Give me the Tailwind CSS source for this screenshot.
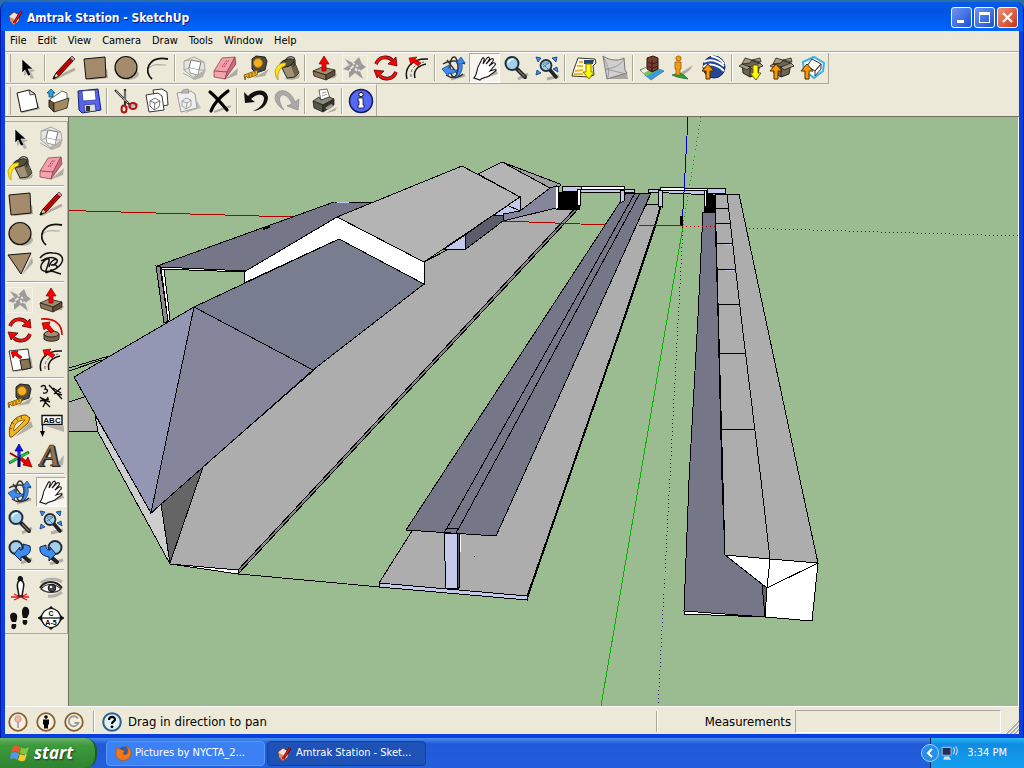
<!DOCTYPE html>
<html lang="en">
<head>
  <meta charset="utf-8">
  <title>Amtrak Station - SketchUp</title>
  <script src="https://cdn.jsdelivr.net/npm/@tailwindcss/browser@4"></script>
</head>
<body class="h-screen flex flex-col overflow-hidden bg-[#2a6ea8] font-['DejaVu_Sans_Condensed','DejaVu_Sans',sans-serif] text-[11px] text-black">

  <!-- icon set, all on a 26px grid -->
  <svg class="hidden" xmlns="http://www.w3.org/2000/svg">
    <symbol id="i-select" viewBox="0 0 26 26">
      <path d="M10 7v14l4-3 3 6 3-1-3-6 4-1z" fill="#b5b2a4"/>
      <path d="M8 4v14l3-3 3 6 3-1-3-6h5z" fill="#000" stroke="#fff" stroke-width=".6"/>
    </symbol>
    <symbol id="i-line" viewBox="0 0 26 26">
      <path d="M3 24 24 14" stroke="#b0ada0" stroke-width="2.5"/>
      <path d="M2 24 5 18 19 3 22 6 8 21z" fill="#e00" stroke="#300" stroke-width="1"/>
      <path d="M7 19 20 5" stroke="#8e0000" stroke-width="1.2"/>
      <path d="M2 24 5 18 8 21z" fill="#e8c88c" stroke="#222" stroke-width=".8"/><path d="M2 24l1-3 2 2z"/>
      <path d="M19 3 21 1 24 4 22 6z" fill="#f08caa" stroke="#333" stroke-width=".8"/>
    </symbol>
    <symbol id="i-rect" viewBox="0 0 26 26">
      <path d="M6 25 26 23 25 14z" fill="#aaa79a"/>
      <path d="M2 4 23 2 24 22 4 24z" fill="#a38b6b" stroke="#111"/>
    </symbol>
    <symbol id="i-circle" viewBox="0 0 26 26">
      <ellipse cx="15" cy="19" rx="11" ry="6" fill="#b5b2a5"/>
      <circle cx="13" cy="12.500" r="11" fill="#a38b6b" stroke="#111" stroke-width="1.2"/>
    </symbol>
    <symbol id="i-arc" viewBox="0 0 26 26">
      <path d="M4 14C9 8 14 10 22 10" fill="none" stroke="#aaa" stroke-width="1.2"/>
      <path d="M8 24C-1 17 4 0 24 4" fill="none" stroke="#111" stroke-width="1.8"/>
    </symbol>
    <symbol id="i-component" viewBox="0 0 26 26">
      <path d="M11 24 25 15 22 22 14 25z" fill="#b8b5a8"/>
      <path d="M3 6 13 2 23 7 24 15 13 23 3 15z" fill="#e6e5e0" stroke="#a5a5a5"/>
      <path d="M8 13 10 5 20 7 18 15z" fill="#fff" stroke="#777"/>
      <path d="M8 13 9 18 17 20 18 15" fill="#fff" stroke="#888" stroke-width=".8"/>
      <path d="M3 15 8 13M24 15 18 15M13 23l2-4M3 6l7-1M23 7l-3 0M2 18l11 6" fill="none" stroke="#aaa"/>
    </symbol>
    <symbol id="i-eraser" viewBox="0 0 26 26">
      <path d="M12 25 26 13 25 20z" fill="#b0ada0"/>
      <path d="M2 16 10 3 23 2 15 17z" fill="#f3a0aa" stroke="#8a4a54" stroke-width=".8"/>
      <path d="M2 16 15 17 13 24 2 22z" fill="#f5a3ad" stroke="#8a4a54" stroke-width=".8"/>
      <path d="M15 17 23 2 24 9 13 24z" fill="#d2697a" stroke="#8a4a54" stroke-width=".8"/>
      <path d="M10 12 15 5M12 12l5-7" stroke="#a04a60" stroke-dasharray="2 1"/>
    </symbol>
    <symbol id="i-tape" viewBox="0 0 26 26">
      <path d="M10 23 26 14 22 21z" fill="#b0ada0"/>
      <path d="M9 4 13 1 22 2 24 6 22 15 13 18 9 14z" fill="#4b4b42" stroke="#222"/>
      <circle cx="15" cy="8" r="4.500" fill="#f5ae1c" stroke="#a87200"/>
      <path d="M1 20 15 15 14 20 5 23 3 21 2 25z" fill="#f5b51c" stroke="#6b4a00" stroke-width=".8"/>
      <path d="M6 19v3M9 18v3M12 17v2" stroke="#533a00" stroke-width=".8"/>
    </symbol>
    <symbol id="i-paint" viewBox="0 0 26 26">
      <path d="M10 24 26 19 25 23 18 25z" fill="#b0ada0"/>
      <path d="M7 11 20 6 25 18 21 22 13 23z" fill="#a09272" stroke="#222"/>
      <path d="M20 6 25 18 21 22 16 8z" fill="#6b6148"/>
      <ellipse cx="13" cy="8" rx="7.500" ry="3.500" transform="rotate(-22 13 8)" fill="#57513c" stroke="#222"/>
      <path d="M11 9C11 2 17 0 20 3 22 6 21 9 19 12" fill="none" stroke="#333" stroke-width="1.300"/>
      <path d="M12 8C6 7 3 11 1 16l1 6 2 3 0-5c1-5 3-8 7-9z" fill="#ffe21a" stroke="#b09000" stroke-width=".7"/>
    </symbol>
    <symbol id="i-push" viewBox="0 0 26 26">
      <path d="M16 24 26 19 24 23z" fill="#b0ada0"/>
      <path d="M2 16 11 12 24 15 15 20z" fill="#a38b6b" stroke="#222" stroke-width=".8"/>
      <path d="M2 16 15 20V25L3 21z" fill="#8a7454" stroke="#222" stroke-width=".8"/>
      <path d="M15 20 24 15V20L15 25z" fill="#5f4e35" stroke="#222" stroke-width=".8"/>
      <path d="M11 16V9H8L13 1l5 8h-3v7z" fill="#f00" stroke="#700" stroke-width=".7"/>
    </symbol>
    <symbol id="i-move" viewBox="0 0 26 26">
      <path d="M.5 .5h25v25h-25z" fill="none" stroke="#fff" stroke-dasharray="1 1"/>
      <path d="M3 4 11 8 17 2 20 9 24 12 18 16 21 24 13 18 7 23 7 16 1 14 7 10z" fill="#9b9b9b"/>
      <path d="M11 8l4 3 3-1M18 16l-3-2-2 4M7 16l3-2-3-4M10 11l5 4" stroke="#ece9d8" stroke-width="2" fill="none" stroke-dasharray="2 2"/>
    </symbol>
    <symbol id="i-rotate" viewBox="0 0 26 26">
      <path d="M3 9C6 1 15 1 19 5" fill="none" stroke="#400" stroke-width="3.600"/>
      <path d="M3 9C6 1 15 1 19 5" fill="none" stroke="#e11" stroke-width="2.400"/>
      <path d="M15 9 23 2 24 11z" fill="#f00" stroke="#400" stroke-width=".7"/>
      <path d="M23 17C20 25 11 25 7 21" fill="none" stroke="#400" stroke-width="3.600"/>
      <path d="M23 17C20 25 11 25 7 21" fill="none" stroke="#e11" stroke-width="2.400"/>
      <path d="M1 15 11 16 4 23z" fill="#f00" stroke="#400" stroke-width=".7"/>
    </symbol>
    <symbol id="i-offset" viewBox="0 0 26 26">
      <path d="M3 24C0 13 8 3 24 4M11 23C9 16 13 11 22 9" fill="none" stroke="#111" stroke-width="1.500"/>
      <path d="M7 22C6 15 10 9 20 7" fill="none" stroke="#666" stroke-dasharray="3 2"/>
      <path d="M5 3 13 2 11 4 17 8 14 11 9 7 7 10z" fill="#f00" stroke="#700" stroke-width=".6"/>
    </symbol>
    <symbol id="i-orbit" viewBox="0 0 26 26">
      <path d="M10 24 24 20" stroke="#b0ada0" stroke-width="3"/>
      <ellipse cx="13" cy="12" rx="4" ry="10" fill="none" stroke="#333" stroke-width="1.500"/>
      <path d="M2 9C8 5 18 5 24 9M6 5 18 21M5 20C10 24 18 23 22 19" fill="none" stroke="#333" stroke-width="1.300"/>
      <path d="M20 2 24 8 21 8C22 15 20 20 14 23 17 18 18 14 18 8L15 8z" fill="#3f8cf0" stroke="#123a80" stroke-width=".7"/>
      <path d="M1 14 8 10 8 13C11 15 13 15 16 15 14 18 12 19 8 18L7 21z" fill="#3f8cf0" stroke="#123a80" stroke-width=".7"/>
    </symbol>
    <symbol id="i-hand" viewBox="0 0 26 26">
      <path d="M10 24 26 19 24 13z" fill="#b5b2a5"/>
      <path d="M2 23C6 19 4 14 7 10L10 4C11 2 13 3 12 5L11 9 15 3C17 1 18 3 17 5L14 9 19 4C21 3 22 4 21 6L17 11 21 8C23 7 24 9 23 10L18 16C21 15 23 14 24 15 24 17 20 18 17 21 14 23 10 22 8 25z" fill="#fff" stroke="#111" stroke-width="1.100"/>
    </symbol>
    <symbol id="i-zoom" viewBox="0 0 26 26">
      <path d="M15 24 25 19" stroke="#b0ada0" stroke-width="3"/>
      <path d="M14 14 22 22" stroke="#222" stroke-width="4" stroke-linecap="round"/>
      <path d="M15 15 22 22" stroke="#777" stroke-width="1.200"/>
      <circle cx="9" cy="8.500" r="6.500" fill="#a5cfe6" stroke="#1f2f3c" stroke-width="2"/>
      <path d="M5 8C6 5 8 4 11 4" stroke="#eafaff" stroke-width="1.600" fill="none"/>
    </symbol>
    <symbol id="i-extents" viewBox="0 0 26 26">
      <path d="M13 24 25 21" stroke="#b0ada0" stroke-width="3"/>
      <path d="M16 15 22 22" stroke="#222" stroke-width="3.500" stroke-linecap="round"/>
      <circle cx="12" cy="10.500" r="5.500" fill="#a5cfe6" stroke="#1f2f3c" stroke-width="1.800"/>
      <path d="M9 8h6M9 12l6-4M9 9l5 5" stroke="#5b7f96"/>
      <path d="M2 2 7 3 4 7zM23 2 22 7 18 3zM2 20 3 15 7 18zM24 17 19 14 23 12z" fill="#3f8cf0" stroke="#123a80" stroke-width=".8"/>
    </symbol>
    <symbol id="i-getview" viewBox="0 0 26 26">
      <path d="M7 3 24 4 25 8 22 11 23 20 18 22 1 21 3 14z" fill="#fffbe0" stroke="#333"/>
      <path d="M13 5h10l-1 4H13z" fill="#23446b"/><path d="M8 7h4M6 11h6M4 16l8-1M3 19h9" stroke="#f3b52c" stroke-width="2"/>
      <path d="M15 9h5v8h3l-5 7-6-7h3z" fill="#ff0" stroke="#8a7a00"/>
    </symbol>
    <symbol id="i-terrain" viewBox="0 0 26 26">
      <path d="M3 24 26 24 25 18z" fill="#aaa79a"/>
      <path d="M1 1C8 6 17 6 22 3L23 15 25 18 5 24z" fill="#cfcfcf" stroke="#777"/>
      <path d="M1 1C5 9 9 16 5 24M4 14 24 19M22 3C20 10 12 13 4 14" fill="none" stroke="#8e8e8e" stroke-width=".8"/>
    </symbol>
    <symbol id="i-building" viewBox="0 0 26 26">
      <path d="M1 15 10 11 25 16 12 25z" fill="#e6e2cf" stroke="#555" stroke-width=".8"/>
      <path d="M5 20 18 13 25 16 12 25z" fill="#3a9bd8"/><path d="M4 18 16 12 20 14 8 21z" fill="#7cc45a"/><path d="M2 16 8 12 14 13 5 18z" fill="#f3eed8"/>
      <path d="M8 3 14 1 19 3V14L13 17 8 14z" fill="#7b3f30" stroke="#2e120c"/>
      <path d="M13 5v12M9 7l4 2 6-2M9 11l4 2 6-2" stroke="#3d1a12" fill="none"/>
    </symbol>
    <symbol id="i-street" viewBox="0 0 26 26">
      <path d="M7 20 23 10 20 15 12 21z" fill="#b0ada0"/>
      <path d="M2 20 9 18 14 20 18 24 12 23 7 22z" fill="#27a340" stroke="#0e6420" stroke-width=".7"/>
      <circle cx="8.500" cy="3.500" r="2.600" fill="#f19a14" stroke="#8c4e00" stroke-width=".7"/>
      <path d="M5 7h6v7h-1v6H6v-6H5z" fill="#f19a14" stroke="#8c4e00" stroke-width=".7"/>
    </symbol>
    <symbol id="i-earth" viewBox="0 0 26 26">
      <circle cx="13" cy="12" r="11" fill="#24479a" stroke="#14265a"/>
      <path d="M3 7C9 3 17 6 23 11M2 12C8 7 17 10 23 16M10 1C15 2 20 4 23 9" fill="none" stroke="#fff" stroke-width="2"/>
      <path d="M5 24V16H1L7 9l6 7H9v8z" fill="#f90" stroke="#4a2a00"/>
    </symbol>
    <symbol id="i-box" viewBox="0 0 26 26">
      <path d="M4 9 12 5 22 8 20 19 12 22 5 18z" fill="#6f6453" stroke="#222"/>
      <path d="M12 11 12 22" stroke="#222"/>
      <path d="M4 9 12 12 9 15 1 11zM12 12 22 8 25 11 15 15zM4 9 7 3 14 5 12 8zM14 5 22 3 23 7z" fill="#a5987e" stroke="#222" stroke-width=".8"/>
    </symbol>
    <symbol id="i-getmodel" viewBox="0 0 26 26">
      <use href="#i-box"/><path d="M15 10h5v8h3l-5 7-6-7h3z" fill="#ff0" stroke="#6b6000"/>
    </symbol>
    <symbol id="i-sharemodel" viewBox="0 0 26 26">
      <use href="#i-box"/><path d="M5 24V16H1L7 9l6 7H9v8z" fill="#f90" stroke="#4a2a00"/>
    </symbol>
    <symbol id="i-sharecomp" viewBox="0 0 26 26">
      <path d="M3 7 14 2 24 8 23 16 14 23 4 15z" fill="#fff" stroke="#36b0e8" stroke-width="2"/>
      <path d="M7 11 12 4 21 9 15 16zM15 16v5M15 16l6-7v5l-6 7" fill="#fff" stroke="#333"/>
      <path d="M5 24V16H1L7 9l6 7H9v8z" fill="#f90" stroke="#4a2a00"/>
    </symbol>
    <symbol id="i-new" viewBox="0 0 26 26">
      <path d="M8 25 26 21 22 10z" fill="#b0ada0"/>
      <path d="M3 5 15 2 21 6 24 20 7 24z" fill="#fff" stroke="#111"/><path d="M15 2 16 7 21 6z" fill="#ddd" stroke="#111" stroke-width=".7"/>
    </symbol>
    <symbol id="i-open" viewBox="0 0 26 26">
      <path d="M5 11 10 8 17 3 22 5V16L8 21z" fill="#fff" stroke="#444" stroke-width=".8"/>
      <path d="M4 12 9 15 9 24 4 19z" fill="#6d5638" stroke="#222"/><path d="M9 15 24 10 22 20 9 24z" fill="#a68a61" stroke="#222" stroke-width=".8"/>
      <path d="M4 9V5H2L6 1l4 4H8v4z" fill="#29a5dd" stroke="#0d4a6a" stroke-width=".8"/>
    </symbol>
    <symbol id="i-save" viewBox="0 0 26 26">
      <path d="M2 3 22 1 25 22 6 25 3 22z" fill="#5564f0" stroke="#14206e"/>
      <path d="M6 3 19 2 20 12 7 13z" fill="#fff" stroke="#14206e" stroke-width=".6"/>
      <path d="M8 17 19 16 20 23 9 24z" fill="#ddd" stroke="#14206e" stroke-width=".6"/><path d="M10 18h4v5h-4z" fill="#333"/>
    </symbol>
    <symbol id="i-cut" viewBox="0 0 26 26">
      <path d="M12 20 25 16" stroke="#b0ada0" stroke-width="2"/>
      <path d="M2 2 17 17M12 1 12 18" stroke="#333" stroke-width="2.200"/><path d="M3 3 15 15M12 3v10" stroke="#ccc" stroke-width=".8"/>
      <ellipse cx="11" cy="21" rx="2.500" ry="3.500" fill="none" stroke="#b01212" stroke-width="2"/>
      <ellipse cx="20" cy="18" rx="3.500" ry="3" fill="none" stroke="#b01212" stroke-width="2"/>
    </symbol>
    <symbol id="i-copy" viewBox="0 0 26 26">
      <path d="M9 2 18 1 23 4 24 17 12 19z" fill="#fff" stroke="#333"/>
      <path d="M2 7 14 5 18 8 20 22 5 24z" fill="#fff" stroke="#333"/>
      <path d="M6 13 11 10 16 13 15 19 10 22 6 18zM6 13l5 2 5-2M11 15l-1 7" fill="none" stroke="#666" stroke-width=".9"/>
    </symbol>
    <symbol id="i-paste" viewBox="0 0 26 26">
      <path d="M10 25 26 20 22 13z" fill="#c2bfb2"/>
      <path d="M2 5 16 3 20 6 22 20 6 24z" fill="#eee" stroke="#999"/><path d="M6 5 8 2 13 1 14 5z" fill="#bbb" stroke="#999"/>
      <path d="M7 13 11 10 16 12 16 18 11 21 7 18zM7 13l5 2 4-3M12 15l-1 6" fill="none" stroke="#999" stroke-width=".9"/>
    </symbol>
    <symbol id="i-delete" viewBox="0 0 26 26">
      <path d="M8 24 25 18" stroke="#b0ada0" stroke-width="2"/>
      <path d="M4 4C9 8 16 16 21 22M22 3C14 9 7 17 5 23" fill="none" stroke="#000" stroke-width="3.200" stroke-linecap="round"/>
    </symbol>
    <symbol id="i-undo" viewBox="0 0 26 26">
      <path d="M1 4 2 15 12 14 8 11C13 6 20 5 21 10 21 16 17 20 10 23 20 22 25 16 25 9 23 0 12 1 5 8z" fill="#111"/>
    </symbol>
    <symbol id="i-redo" viewBox="0 0 26 26">
      <path d="M24 22 25 11 21 14C18 4 7 -1 2 6 -1 12 4 18 10 22 5 15 4 9 8 7 12 6 16 11 18 16L13 18z" fill="#aaa" stroke="#888" stroke-width=".7"/>
    </symbol>
    <symbol id="i-print" viewBox="0 0 26 26">
      <path d="M15 25 26 19 24 23z" fill="#b0ada0"/>
      <path d="M8 2 16 1 19 10 10 13z" fill="#fff" stroke="#444" stroke-width=".8"/><path d="M11 5l4-1M11 8l5-2" stroke="#999"/>
      <path d="M2 13 8 9 10 12 18 9 23 11 12 17z" fill="#8a8a78" stroke="#222" stroke-width=".8"/>
      <path d="M2 13 12 17V24L3 20z" fill="#55564a" stroke="#222" stroke-width=".8"/><path d="M12 17 23 11V17L12 24z" fill="#34352c" stroke="#222" stroke-width=".8"/>
      <path d="M14 20l6-4 3 2-6 4z" fill="#9b9b8c"/>
    </symbol>
    <symbol id="i-info" viewBox="0 0 26 26">
      <circle cx="13" cy="13" r="11.500" fill="#5468f5" stroke="#111a60" stroke-width="1.500"/>
      <circle cx="13" cy="6.500" r="2.200" fill="#fff" stroke="#112"/>
      <path d="M10 10h5v7h1v3h-6v-3h1v-4h-1z" fill="#fff" stroke="#112" stroke-width=".8"/>
    </symbol>
    <symbol id="i-polygon" viewBox="0 0 26 26">
      <path d="M15 24 26 12 25 6z" fill="#b0ada0"/><path d="M1 4 24 2 14 23z" fill="#a38b6b" stroke="#111"/>
    </symbol>
    <symbol id="i-freehand" viewBox="0 0 26 26">
      <path d="M2 7C6 2 10 1 15 2 22 2 26 6 24 11 21 18 9 23 4 19 0 14 8 7 11 8 12 12 7 18 8 22M11 16C13 8 21 6 19 11 17 14 13 14 13 14 22 12 20 20 12 19M3 10C10 5 17 6 19 9M8 22C14 18 18 22 23 23" fill="none" stroke="#111" stroke-width="1.500"/>
    </symbol>
    <symbol id="i-follow" viewBox="0 0 26 26">
      <path d="M3 2C18 1 24 8 24 18" fill="none" stroke="#d00" stroke-width="1.600"/>
      <path d="M6 17v5c3 3 12 3 15 0v-5z" fill="#7b6546" stroke="#222"/><ellipse cx="13.500" cy="17" rx="7.500" ry="3" fill="#a38b6b" stroke="#222"/>
      <path d="M4 6 12 5 11 8 16 14 13 16 8 11 6 13z" fill="#f00" stroke="#700" stroke-width=".7"/>
    </symbol>
    <symbol id="i-scale" viewBox="0 0 26 26">
      <path d="M8 25 26 21 24 10z" fill="#b0ada0"/>
      <path d="M2 4 21 2 24 21 6 24z" fill="#fff" stroke="#333"/><path d="M13 13 22 12 24 21 15 23z" fill="#8a7454" stroke="#222"/>
      <path d="M4 5 11 4 10 6 15 10 13 12 8 8 6 11z" fill="#f00" stroke="#700" stroke-width=".7"/>
    </symbol>
    <symbol id="i-dimension" viewBox="0 0 26 26">
      <path d="M3 4C5 1 9 3 7 6 11 6 10 11 5 10M11 2 24 16M2 14 12 24M16 11l7-6M15 5l8 5M17 10l7 2M2 18l9-2M5 24l5-10M3 15l9 4" fill="none" stroke="#111" stroke-width="1.400"/>
    </symbol>
    <symbol id="i-protractor" viewBox="0 0 26 26">
      <path d="M8 24 26 14 24 8z" fill="#b0ada0"/>
      <path d="M3 24C0 12 8 2 19 2L23 5 21 10 5 24z" fill="#f5b51c" stroke="#6b4a00"/>
      <path d="M7 18C6 13 10 7 18 7z" fill="#ece9d8" stroke="#6b4a00" stroke-width=".8"/>
      <path d="M2 15l3 1M4 9l3 2M9 5l2 3M14 3l1 3" stroke="#6b4a00" stroke-width=".8"/>
    </symbol>
    <symbol id="i-text" viewBox="0 0 26 26">
      <path d="M8 13h18v6z" fill="#b5b2a5"/>
      <path d="M4 2.500h20v9H4z" fill="#fff" stroke="#111" stroke-width="1.400"/><path d="M4.500 11v9" stroke="#111" stroke-width="1.200"/>
      <path d="M2 18h5L4.500 24z"/>
      <text x="14" y="10" font-family="Liberation Sans, sans-serif" font-size="8" font-weight="bold" text-anchor="middle">ABC</text>
    </symbol>
    <symbol id="i-axes" viewBox="0 0 26 26">
      <path d="M3 10 20 20" stroke="#800" stroke-width="2"/><path d="M12 14 18 19" stroke="#e00" stroke-width="4"/><path d="M16 22 25 24 21 14z" fill="#e00" stroke="#600" stroke-width=".7"/>
      <path d="M2 20 22 9" stroke="#0a7a1a" stroke-width="3"/><path d="M3 19 21 10" stroke="#2c4" stroke-width="1.400"/>
      <path d="M12 24V8" stroke="#007" stroke-width="3"/><path d="M12 14V6" stroke="#22f" stroke-width="2"/><path d="M8 8 12 1l4 7z" fill="#11f" stroke="#006" stroke-width=".7"/>
    </symbol>
    <symbol id="i-3dtext" viewBox="0 0 26 26">
      <path d="M16 24 26 12 25 22z" fill="#b5b2a5"/>
      <text x="13.500" y="24" font-family="Liberation Serif, serif" font-size="32" font-weight="bold" font-style="italic" text-anchor="middle" fill="#222">A</text>
      <text x="12" y="23" font-family="Liberation Serif, serif" font-size="32" font-weight="bold" font-style="italic" text-anchor="middle" fill="#8a7454" stroke="#222" stroke-width=".6">A</text>
    </symbol>
    <symbol id="i-prev" viewBox="0 0 26 26">
      <path d="M14 24 25 20" stroke="#b0ada0" stroke-width="3"/>
      <path d="M15 16 22 22" stroke="#222" stroke-width="4" stroke-linecap="round"/>
      <circle cx="9" cy="8.500" r="6.500" fill="#a5cfe6" stroke="#1f2f3c" stroke-width="2"/>
      <path d="M7 15 13 8V11C16 11 17 9 16 5L23 7C25 14 20 17 14 18V22z" fill="#3f8cf0" stroke="#0a2050"/>
    </symbol>
    <symbol id="i-next" viewBox="0 0 26 26">
      <path d="M12 25 25 21" stroke="#b0ada0" stroke-width="3"/>
      <path d="M13 18 19 23" stroke="#222" stroke-width="4" stroke-linecap="round"/>
      <circle cx="17" cy="8.500" r="6.500" fill="#a5cfe6" stroke="#1f2f3c" stroke-width="2"/>
      <path d="M18 15 12 8V11C9 11 8 10 8 6L2 8C1 14 5 17 11 18V22z" fill="#3f8cf0" stroke="#0a2050"/>
    </symbol>
    <symbol id="i-camera" viewBox="0 0 26 26">
      <path d="M7 19l13 6M20 19 7 25M4 22h18" stroke="#e11" stroke-width="1.300"/>
      <path d="M13 2c2 0 3 2 2 4 2 1 2 5 1 9l-1 6h-3l-1-6c-1-3-1-8 1-9-1-2-1-4 1-4z" fill="#fff" stroke="#111" stroke-width="1.500"/>
      <path d="M13 1c3 0 3 3 2 5l-3 0c-1-2-1-5 1-5z" fill="#111"/>
    </symbol>
    <symbol id="i-look" viewBox="0 0 26 26">
      <path d="M3 8C8 3 18 3 24 7M10 21c6 1 10-1 14-4" fill="none" stroke="#b5b2a5" stroke-width="3"/>
      <path d="M3 14C8 8 17 8 23 14 17 19 8 18 3 14z" fill="#fff" stroke="#333" stroke-width="1.200"/>
      <circle cx="14" cy="13" r="3.800" fill="#444" stroke="#111"/><circle cx="13" cy="12" r="1.200" fill="#fff"/>
      <path d="M2 13C7 5 18 5 24 13" fill="none" stroke="#222" stroke-width="2"/>
    </symbol>
    <symbol id="i-walk" viewBox="0 0 26 26">
      <path d="M5 8c4-1 6 2 5 6l-1 3H5c-2-3-3-8 0-9zM5 19h4c1 3-1 6-3 5-2 0-2-3-1-5zM17 2c4-1 6 3 5 7l-2 4h-4c-1-3-2-9 1-11zM16 15h4c1 4-1 5-2 5-2 0-3-3-2-5z" fill="#111"/>
    </symbol>
    <symbol id="i-section" viewBox="0 0 26 26">
      <path d="M13 1 26 13 13 25 0 13z" fill="#111"/><circle cx="13" cy="13" r="9.500" fill="#fff" stroke="#111" stroke-width="1.200"/>
      <path d="M0 13h26" stroke="#111" stroke-width="1.300"/>
      <text x="13" y="11" font-family="Liberation Sans, sans-serif" font-size="7" font-weight="bold" text-anchor="middle">C</text>
      <text x="13" y="20" font-family="Liberation Sans, sans-serif" font-size="7" font-weight="bold" text-anchor="middle">A-5</text>
    </symbol>
    <symbol id="i-app" viewBox="0 0 16 16">
      <path d="M2 6 7 2 12 5 12 11 7 15 3 11z" fill="#e9e2d6" stroke="#6a3a28" stroke-width=".8"/><path d="M3 7 7 9 7 15 3 11z" fill="#d88a68"/>
      <path d="M7 13 14 2" stroke="#400" stroke-width="2.600"/><path d="M7 13 14 2" stroke="#e11" stroke-width="1.400"/>
    </symbol>
  </svg>

  <!-- application window -->
  <div class="flex-1 min-h-0 flex flex-col mt-0.5 rounded-t-lg bg-[#0a3fe0] border-x border-[#0019a8] overflow-hidden">
    <header class="h-[29px] shrink-0 flex items-center gap-1 pl-1.5 pr-[5px] pt-0.5 bg-linear-to-b from-[#0a5ce8] via-[#0054e3] via-30% to-[#0066ff]">
      <svg class="w-4 h-4"><use href="#i-app"/></svg>
      <h1 class="flex-1 text-[12px] font-bold text-white [text-shadow:1px_1px_#0a1883]">Amtrak Station - SketchUp</h1>
      <div class="flex gap-0.5">
        <button aria-label="Minimize" class="w-[21px] h-[21px] rounded-[3px] border border-white bg-linear-to-br from-[#6f95f5] to-[#1c4fd0] flex items-center justify-center"><svg class="w-[15px] h-[15px]" viewBox="0 0 15 15"><path d="M3 10h7v3H3z" fill="#fff"/></svg></button>
        <button aria-label="Maximize" class="w-[21px] h-[21px] rounded-[3px] border border-white bg-linear-to-br from-[#6f95f5] to-[#1c4fd0] flex items-center justify-center"><svg class="w-[15px] h-[15px]" viewBox="0 0 15 15"><path d="M2 2h11v11H2zM3 5v7h9V5z" fill="#fff" fill-rule="evenodd"/></svg></button>
        <button aria-label="Close" class="w-[21px] h-[21px] rounded-[3px] border border-white bg-linear-to-br from-[#ee8f78] to-[#c8300c] flex items-center justify-center"><svg class="w-[15px] h-[15px]" viewBox="0 0 15 15"><path d="M3 3 12 12M12 3 3 12" stroke="#fff" stroke-width="2.200"/></svg></button>
      </div>
    </header>

    <div class="flex-1 min-h-0 mx-1 mb-1 flex flex-col bg-[#ece9d8]">
      <nav class="h-5 shrink-0 flex items-center pl-[5px] gap-[11px]">
        <button>File</button><button>Edit</button><button>View</button><button>Camera</button><button>Draw</button><button>Tools</button><button>Window</button><button>Help</button>
      </nav>

      <div class="shrink-0 border-t border-[#aca899] flex flex-col items-start">
        <div class="h-px self-stretch bg-white"></div>
        <div class="h-[31px] flex items-center border-b border-r border-[#aca899] pl-0.5">
          <div class="w-1 h-7 border-x border-l-white border-r-[#aca899]"></div>
          <button aria-label="Select" class="w-[31px] h-[30px] flex items-center justify-center"><svg class="w-[26px] h-[26px]"><use href="#i-select"/></svg></button>
          <div class="w-0.5 h-[26px] mx-0.5 border-l border-[#aca899] bg-white"></div>
          <button aria-label="Line" class="w-[31px] h-[30px] flex items-center justify-center"><svg class="w-[26px] h-[26px]"><use href="#i-line"/></svg></button>
          <button aria-label="Rectangle" class="w-[31px] h-[30px] flex items-center justify-center"><svg class="w-[26px] h-[26px]"><use href="#i-rect"/></svg></button>
          <button aria-label="Circle" class="w-[31px] h-[30px] flex items-center justify-center"><svg class="w-[26px] h-[26px]"><use href="#i-circle"/></svg></button>
          <button aria-label="Arc" class="w-[31px] h-[30px] flex items-center justify-center"><svg class="w-[26px] h-[26px]"><use href="#i-arc"/></svg></button>
          <div class="w-0.5 h-[26px] mx-0.5 border-l border-[#aca899] bg-white"></div>
          <button aria-label="Make Component" class="w-[31px] h-[30px] flex items-center justify-center"><svg class="w-[26px] h-[26px]"><use href="#i-component"/></svg></button>
          <button aria-label="Eraser" class="w-[31px] h-[30px] flex items-center justify-center"><svg class="w-[26px] h-[26px]"><use href="#i-eraser"/></svg></button>
          <button aria-label="Tape Measure" class="w-[31px] h-[30px] flex items-center justify-center"><svg class="w-[26px] h-[26px]"><use href="#i-tape"/></svg></button>
          <button aria-label="Paint Bucket" class="w-[31px] h-[30px] flex items-center justify-center"><svg class="w-[26px] h-[26px]"><use href="#i-paint"/></svg></button>
          <div class="w-0.5 h-[26px] mx-0.5 border-l border-[#aca899] bg-white"></div>
          <button aria-label="Push/Pull" class="w-[31px] h-[30px] flex items-center justify-center"><svg class="w-[26px] h-[26px]"><use href="#i-push"/></svg></button>
          <button aria-label="Move" class="w-[31px] h-[30px] flex items-center justify-center"><svg class="w-[26px] h-[26px]"><use href="#i-move"/></svg></button>
          <button aria-label="Rotate" class="w-[31px] h-[30px] flex items-center justify-center"><svg class="w-[26px] h-[26px]"><use href="#i-rotate"/></svg></button>
          <button aria-label="Offset" class="w-[31px] h-[30px] flex items-center justify-center"><svg class="w-[26px] h-[26px]"><use href="#i-offset"/></svg></button>
          <div class="w-0.5 h-[26px] mx-0.5 border-l border-[#aca899] bg-white"></div>
          <button aria-label="Orbit" class="w-[31px] h-[30px] flex items-center justify-center"><svg class="w-[26px] h-[26px]"><use href="#i-orbit"/></svg></button>
          <button aria-label="Pan" class="w-[31px] h-[30px] flex items-center justify-center bg-[#f6f4ec] border border-t-[#aca899] border-l-[#aca899] border-b-white border-r-white"><svg class="w-[26px] h-[26px]"><use href="#i-hand"/></svg></button>
          <button aria-label="Zoom" class="w-[31px] h-[30px] flex items-center justify-center"><svg class="w-[26px] h-[26px]"><use href="#i-zoom"/></svg></button>
          <button aria-label="Zoom Extents" class="w-[31px] h-[30px] flex items-center justify-center"><svg class="w-[26px] h-[26px]"><use href="#i-extents"/></svg></button>
          <div class="w-0.5 h-[26px] mx-0.5 border-l border-[#aca899] bg-white"></div>
          <button aria-label="Get Current View" class="w-[31px] h-[30px] flex items-center justify-center"><svg class="w-[26px] h-[26px]"><use href="#i-getview"/></svg></button>
          <button aria-label="Toggle Terrain" class="w-[31px] h-[30px] flex items-center justify-center"><svg class="w-[26px] h-[26px]"><use href="#i-terrain"/></svg></button>
          <div class="w-0.5 h-[26px] mx-0.5 border-l border-[#aca899] bg-white"></div>
          <button aria-label="Add New Building" class="w-[31px] h-[30px] flex items-center justify-center"><svg class="w-[26px] h-[26px]"><use href="#i-building"/></svg></button>
          <button aria-label="Photo Textures" class="w-[31px] h-[30px] flex items-center justify-center"><svg class="w-[26px] h-[26px]"><use href="#i-street"/></svg></button>
          <button aria-label="Preview in Google Earth" class="w-[31px] h-[30px] flex items-center justify-center"><svg class="w-[26px] h-[26px]"><use href="#i-earth"/></svg></button>
          <div class="w-0.5 h-[26px] mx-0.5 border-l border-[#aca899] bg-white"></div>
          <button aria-label="Get Models" class="w-[31px] h-[30px] flex items-center justify-center"><svg class="w-[26px] h-[26px]"><use href="#i-getmodel"/></svg></button>
          <button aria-label="Share Model" class="w-[31px] h-[30px] flex items-center justify-center"><svg class="w-[26px] h-[26px]"><use href="#i-sharemodel"/></svg></button>
          <button aria-label="Share Component" class="w-[31px] h-[30px] flex items-center justify-center"><svg class="w-[26px] h-[26px]"><use href="#i-sharecomp"/></svg></button>
        </div>
        <div class="h-8 flex items-center border-t border-t-white border-r border-r-[#aca899] pl-0.5">
          <div class="w-1 h-7 border-x border-l-white border-r-[#aca899]"></div>
          <button aria-label="New" class="w-[31px] h-[30px] flex items-center justify-center"><svg class="w-[26px] h-[26px]"><use href="#i-new"/></svg></button>
          <button aria-label="Open" class="w-[31px] h-[30px] flex items-center justify-center"><svg class="w-[26px] h-[26px]"><use href="#i-open"/></svg></button>
          <button aria-label="Save" class="w-[31px] h-[30px] flex items-center justify-center"><svg class="w-[26px] h-[26px]"><use href="#i-save"/></svg></button>
          <div class="w-0.5 h-[26px] mx-0.5 border-l border-[#aca899] bg-white"></div>
          <button aria-label="Cut" class="w-[31px] h-[30px] flex items-center justify-center"><svg class="w-[26px] h-[26px]"><use href="#i-cut"/></svg></button>
          <button aria-label="Copy" class="w-[31px] h-[30px] flex items-center justify-center"><svg class="w-[26px] h-[26px]"><use href="#i-copy"/></svg></button>
          <button aria-label="Paste" class="w-[31px] h-[30px] flex items-center justify-center"><svg class="w-[26px] h-[26px]"><use href="#i-paste"/></svg></button>
          <button aria-label="Delete" class="w-[31px] h-[30px] flex items-center justify-center"><svg class="w-[26px] h-[26px]"><use href="#i-delete"/></svg></button>
          <div class="w-0.5 h-[26px] mx-0.5 border-l border-[#aca899] bg-white"></div>
          <button aria-label="Undo" class="w-[31px] h-[30px] flex items-center justify-center"><svg class="w-[26px] h-[26px]"><use href="#i-undo"/></svg></button>
          <button aria-label="Redo" class="w-[31px] h-[30px] flex items-center justify-center"><svg class="w-[26px] h-[26px]"><use href="#i-redo"/></svg></button>
          <div class="w-0.5 h-[26px] mx-0.5 border-l border-[#aca899] bg-white"></div>
          <button aria-label="Print" class="w-[31px] h-[30px] flex items-center justify-center"><svg class="w-[26px] h-[26px]"><use href="#i-print"/></svg></button>
          <div class="w-0.5 h-[26px] mx-0.5 border-l border-[#aca899] bg-white"></div>
          <button aria-label="Model Info" class="w-[31px] h-[30px] flex items-center justify-center"><svg class="w-[26px] h-[26px]"><use href="#i-info"/></svg></button>
        </div>
      </div>

      <div class="flex-1 min-h-0 flex border-t border-[#716f64]">
        <!-- large tool set -->
        <aside class="w-[63px] shrink-0 pt-1">
          <div class="border-t border-r border-b border-[#aca899] pt-px pr-px">
          <div class="grid grid-cols-2">
            <button aria-label="Select" class="h-[30px] flex items-center justify-center"><svg class="w-[26px] h-[26px]"><use href="#i-select"/></svg></button>
            <button aria-label="Make Component" class="h-[30px] flex items-center justify-center"><svg class="w-[26px] h-[26px]"><use href="#i-component"/></svg></button>
            <button aria-label="Paint Bucket" class="h-[30px] flex items-center justify-center"><svg class="w-[26px] h-[26px]"><use href="#i-paint"/></svg></button>
            <button aria-label="Eraser" class="h-[30px] flex items-center justify-center"><svg class="w-[26px] h-[26px]"><use href="#i-eraser"/></svg></button>
          </div>
          <div class="h-0.5 my-0.5 mx-0.5 border-t border-[#aca899] bg-white"></div>
          <div class="grid grid-cols-2">
            <button aria-label="Rectangle" class="h-[30px] flex items-center justify-center"><svg class="w-[26px] h-[26px]"><use href="#i-rect"/></svg></button>
            <button aria-label="Line" class="h-[30px] flex items-center justify-center"><svg class="w-[26px] h-[26px]"><use href="#i-line"/></svg></button>
            <button aria-label="Circle" class="h-[30px] flex items-center justify-center"><svg class="w-[26px] h-[26px]"><use href="#i-circle"/></svg></button>
            <button aria-label="Arc" class="h-[30px] flex items-center justify-center"><svg class="w-[26px] h-[26px]"><use href="#i-arc"/></svg></button>
            <button aria-label="Polygon" class="h-[30px] flex items-center justify-center"><svg class="w-[26px] h-[26px]"><use href="#i-polygon"/></svg></button>
            <button aria-label="Freehand" class="h-[30px] flex items-center justify-center"><svg class="w-[26px] h-[26px]"><use href="#i-freehand"/></svg></button>
          </div>
          <div class="h-0.5 my-0.5 mx-0.5 border-t border-[#aca899] bg-white"></div>
          <div class="grid grid-cols-2">
            <button aria-label="Move" class="h-[30px] flex items-center justify-center"><svg class="w-[26px] h-[26px]"><use href="#i-move"/></svg></button>
            <button aria-label="Push/Pull" class="h-[30px] flex items-center justify-center"><svg class="w-[26px] h-[26px]"><use href="#i-push"/></svg></button>
            <button aria-label="Rotate" class="h-[30px] flex items-center justify-center"><svg class="w-[26px] h-[26px]"><use href="#i-rotate"/></svg></button>
            <button aria-label="Follow Me" class="h-[30px] flex items-center justify-center"><svg class="w-[26px] h-[26px]"><use href="#i-follow"/></svg></button>
            <button aria-label="Scale" class="h-[30px] flex items-center justify-center"><svg class="w-[26px] h-[26px]"><use href="#i-scale"/></svg></button>
            <button aria-label="Offset" class="h-[30px] flex items-center justify-center"><svg class="w-[26px] h-[26px]"><use href="#i-offset"/></svg></button>
          </div>
          <div class="h-0.5 my-0.5 mx-0.5 border-t border-[#aca899] bg-white"></div>
          <div class="grid grid-cols-2">
            <button aria-label="Tape Measure" class="h-[30px] flex items-center justify-center"><svg class="w-[26px] h-[26px]"><use href="#i-tape"/></svg></button>
            <button aria-label="Dimension" class="h-[30px] flex items-center justify-center"><svg class="w-[26px] h-[26px]"><use href="#i-dimension"/></svg></button>
            <button aria-label="Protractor" class="h-[30px] flex items-center justify-center"><svg class="w-[26px] h-[26px]"><use href="#i-protractor"/></svg></button>
            <button aria-label="Text" class="h-[30px] flex items-center justify-center"><svg class="w-[26px] h-[26px]"><use href="#i-text"/></svg></button>
            <button aria-label="Axes" class="h-[30px] flex items-center justify-center"><svg class="w-[26px] h-[26px]"><use href="#i-axes"/></svg></button>
            <button aria-label="3D Text" class="h-[30px] flex items-center justify-center"><svg class="w-[26px] h-[26px]"><use href="#i-3dtext"/></svg></button>
          </div>
          <div class="h-0.5 my-0.5 mx-0.5 border-t border-[#aca899] bg-white"></div>
          <div class="grid grid-cols-2">
            <button aria-label="Orbit" class="h-[30px] flex items-center justify-center"><svg class="w-[26px] h-[26px]"><use href="#i-orbit"/></svg></button>
            <button aria-label="Pan" class="h-[30px] flex items-center justify-center bg-[#f6f4ec] border border-t-[#aca899] border-l-[#aca899] border-b-white border-r-white"><svg class="w-[26px] h-[26px]"><use href="#i-hand"/></svg></button>
            <button aria-label="Zoom" class="h-[30px] flex items-center justify-center"><svg class="w-[26px] h-[26px]"><use href="#i-zoom"/></svg></button>
            <button aria-label="Zoom Extents" class="h-[30px] flex items-center justify-center"><svg class="w-[26px] h-[26px]"><use href="#i-extents"/></svg></button>
            <button aria-label="Previous" class="h-[30px] flex items-center justify-center"><svg class="w-[26px] h-[26px]"><use href="#i-prev"/></svg></button>
            <button aria-label="Next" class="h-[30px] flex items-center justify-center"><svg class="w-[26px] h-[26px]"><use href="#i-next"/></svg></button>
          </div>
          <div class="h-0.5 my-0.5 mx-0.5 border-t border-[#aca899] bg-white"></div>
          <div class="grid grid-cols-2">
            <button aria-label="Position Camera" class="h-[30px] flex items-center justify-center"><svg class="w-[26px] h-[26px]"><use href="#i-camera"/></svg></button>
            <button aria-label="Look Around" class="h-[30px] flex items-center justify-center"><svg class="w-[26px] h-[26px]"><use href="#i-look"/></svg></button>
            <button aria-label="Walk" class="h-[30px] flex items-center justify-center"><svg class="w-[26px] h-[26px]"><use href="#i-walk"/></svg></button>
            <button aria-label="Section Plane" class="h-[30px] flex items-center justify-center"><svg class="w-[26px] h-[26px]"><use href="#i-section"/></svg></button>
          </div>
          </div>
        </aside>

        <!-- model -->
        <main class="flex-1 min-w-0 min-h-0 border-l border-[#716f64] border-r border-r-white bg-[#9abc90]">
          <svg class="block w-full h-full" viewBox="68 117 949 589" preserveAspectRatio="xMidYMid slice" shape-rendering="crispEdges" stroke="#000" stroke-width="1" fill="none">
            <!-- axes -->
            <path d="M68 210.500 293 217" stroke="#b00000"/>
            <path d="M682 226 600 706" stroke="#00b400"/>
            <path d="M700 117 682 226" stroke="#00a000" stroke-dasharray="1 3"/>
            <path d="M682 227 657 706" stroke="#101050" stroke-dasharray="1 3"/>
            <path d="M740 228 1019 236" stroke="#402010" stroke-dasharray="1 3"/>
            <path d="M238 574 379 587"/>
            <path d="M68 368 108 356M68 371 100 360"/>
            <!-- station platform -->
            <path d="M68 402 83 397 97 432 68 431z" fill="#adadad" stroke="none"/><path d="M68 402 83 397M68 431 97 432"/>
            <path d="M169 564 150 512 313 370 423 262 502 221 554 208 578 206 237 570z" fill="#adadad"/>
            <path d="M237 570 578 204 579 207 237 574z" fill="#858585"/>
            <path d="M169 564 237 570 237 574z" fill="#fff"/>
            <path d="M94 415 97 432 169 564 160 504 151 513z" fill="#cecece"/>
            <path d="M160 504 202 467 169 563z" fill="#656565"/>
            <!-- station building -->
            <path d="M155 266 159 267 167 321 163 323z" fill="#8c8c8c"/><path d="M160 268 163 269 169 319 167 321z" fill="#fff"/>
            <path d="M160 267 244 270 243 272 161 269z" fill="#fff"/>
            <path d="M156 266 333 202 371 203 336 217 245 271 160 267z" fill="#757789"/>
            <path d="M336 202h12" stroke="#c3c9ea"/><path d="M262 229 269 227" stroke-width="2"/>
            <path d="M477 174 501 162 549 188 519 211 519 197z" fill="#b4b4b4"/>
            <path d="M501 162 559 184 559 186 549 188z" fill="#9f9f9f"/>
            <path d="M493 215 519 197 519 211 502 215z" fill="#c3c9ea"/><path d="M506 205 519 211"/>
            <path d="M502 214 519 211 549 188 555 186 555 208 502 221z" fill="#85869c"/>
            <path d="M464 235 492 215 502 215 502 221 465 249z" fill="#5c5c6a"/>
            <path d="M443 249 464 235 464 249z" fill="#c3c9ea"/>
            <path d="M336 217 461 166 519 197 423 262z" fill="#b4b4b4"/>
            <path d="M336 217 423 262 423 284 338 239 243 283 243 272z" fill="#fff"/>
            <path d="M193 307 338 239 423 284 312 370z" fill="#787d90"/>
            <path d="M193 307 73 377 150 513z" fill="#9497b3"/>
            <path d="M193 307 312 370 150 513z" fill="#85869c"/>
            <!-- centre platform -->
            <path d="M646 204 660 205 654 226 624 316 526 596 378 583 411 531z" fill="#adadad"/>
            <path d="M660 205 654 226 624 316 526 598" stroke-width="2"/>
            <path d="M378 583 526 596 526 600 378 587z" fill="#c3c9ea"/>
            <path d="M625 193 650 193 495 536 405 530z" fill="#757789"/>
            <path d="M634 193 446 528 443 533M639 193 458 528 455 533M446 528H458M443 533H455"/>
            <path d="M456 533 458 533 459 586 457 589z" fill="#5c5c6a"/>
            <path d="M443 533 456 533 457 589 445 588z" fill="#c3c9ea"/>
            <path d="M459.500 535V552" stroke="#fff"/><path d="M473 556h1"/>
            <!-- right platform -->
            <path d="M714 194 738 194 759 293 799 480 817 563 769 559 724 555z" fill="#adadad"/>
            <path d="M726 194 740 316 760 480 769 559M714 208H727M714 223H729M715 243H732M715 269H735M716 304H739M718 353 745 354M720 429 754 430"/>
            <path d="M724 244h7M724 270h9" stroke="#c3c9ea"/>
            <path d="M702 212 714 212 717 316 721 480 724 555 766 588 764 617 683 611 688 480 697 316z" fill="#757789"/>
            <path d="M683 611 764 617 683 614z" fill="#fff"/>
            <path d="M724 555 769 559 817 563 811 621 764 617 766 588z" fill="#fff"/>
            <path d="M769 559 766 588 817 563"/><path d="M761 584 766 588 764 617z" fill="#656565"/>
            <!-- footbridge -->
            <path d="M557 192H578V209H556z" fill="#000"/><path d="M555.500 187v21" stroke="#fff" stroke-width="2"/><path d="M557.500 187v21"/>
            <path d="M561 186H580V191H561z" fill="#c3c9ea"/><path d="M580 186 623 187 623 190 580 189z" fill="#fff"/>
            <path d="M576 189 633 190 633 193 576 192z" fill="#c3c9ea"/>
            <path d="M576 189H579V205H576z" fill="#fff"/><path d="M619 190H623V201L619 203z" fill="#c3c9ea"/>
            <path d="M647 189H657L711 191V195L647 192z" fill="#c3c9ea"/><path d="M659 187 706 189 706 191 659 190z" fill="#fff"/>
            <path d="M657 190H661V207L657 206z" fill="#c3c9ea"/><path d="M706 188H724V193H706z" fill="#c3c9ea"/>
            <path d="M704 195H714V212H703z" fill="#000"/><path d="M703 190H705V206H703z" fill="#fff"/>
            <path d="M502 221 605 225M637 225 681 226" stroke="#b00000"/><path d="M681 226 714 227" stroke="#b00000" stroke-dasharray="1 3"/>
            <path d="M687 117 683 192 681 226" stroke="#0000c0"/>
            <path d="M679 216H681V225H680z" fill="#000"/>
          </svg>
        </main>
      </div>

      <footer class="h-7 shrink-0 flex items-center border-t border-white pl-[3px] pt-0.5 text-[13px]">
        <div class="flex gap-2">
          <button aria-label="Geo-location"><svg class="w-5 h-5 block" viewBox="0 0 20 20"><circle cx="10" cy="10" r="8.800" fill="#f6efe0" stroke="#87602c" stroke-width="1.800"/><circle cx="10" cy="7" r="3.200" fill="#edb8a8" stroke="#c99"/><path d="M10 10v6" stroke="#a88" stroke-width="1.400"/></svg></button>
          <button aria-label="Credits"><svg class="w-5 h-5 block" viewBox="0 0 20 20"><circle cx="10" cy="10" r="8.800" fill="#f6efe0" stroke="#87602c" stroke-width="1.800"/><circle cx="10" cy="5" r="1.800"/><path d="M7 7.500h6v5h-1v4H8v-4H7z"/></svg></button>
          <button aria-label="Sign in"><svg class="w-5 h-5 block" viewBox="0 0 20 20"><circle cx="10" cy="10" r="8.800" fill="#f6efe0" stroke="#87602c" stroke-width="1.800"/><path d="M14 6.500A5 5 0 1 0 14.500 11H10.500" fill="none" stroke="#999" stroke-width="1.800"/></svg></button>
        </div>
        <div class="w-0.5 h-[21px] ml-[9px] mr-[7px] border-l border-[#aca899] bg-white"></div>
        <button aria-label="Help" class="mr-1.5"><svg class="w-5 h-5 block" viewBox="0 0 20 20"><circle cx="10" cy="10" r="8.800" fill="#e4f0f8" stroke="#2f6288" stroke-width="2"/><path d="M7 8C7 4 13 4 13 7.500 13 9.500 10 9.500 10 12" fill="none" stroke="#000" stroke-width="2.200"/><circle cx="10" cy="14.800" r="1.400"/></svg></button>
        <p class="flex-1">Drag in direction to pan</p>
        <div class="w-0.5 h-[21px] mr-[47px] border-l border-[#aca899] bg-white"></div>
        <label for="measure">Measurements</label>
        <input id="measure" type="text" class="w-[206px] h-[23px] ml-1 px-1 bg-[#ece9d8] border border-t-[#aca899] border-l-[#aca899] border-b-white border-r-white outline-none">
        <svg class="w-[14px] h-[14px] ml-1 self-end" viewBox="0 0 14 14"><path d="M1 14 14 1M5 14 14 5M9 14 14 9" stroke="#aca899" stroke-width="2"/><path d="M0 14 13 1M4 14 14 4M8 14 14 8" stroke="#fff"/></svg>
      </footer>
    </div>
  </div>

  <!-- taskbar -->
  <div class="h-[30px] shrink-0 flex items-stretch text-white bg-linear-to-b from-[#4a90ea] via-[#2259d8] via-20% to-[#235fdc]">
    <button class="w-[97px] flex items-center gap-1 pl-2.5 rounded-r-xl bg-linear-to-b from-[#68b068] via-[#3c9a3c] via-25% to-[#2f8430] border-r-2 border-[#1d5c2a]">
      <svg class="w-5 h-5" viewBox="0 0 20 20"><path d="M3 4C5 2 8 3 10 4L9 10C7 8 4 8 1 9z" fill="#f0562a"/><path d="M11 4C13 6 16 6 19 4L17 10C15 12 12 11 10 10z" fill="#86c440"/><path d="M1 10C4 9 7 9 9 11L7 17C5 15 3 15 0 16z" fill="#5a96f0"/><path d="M10 11C12 12 15 13 17 11L15 17C13 19 10 18 8 17z" fill="#fcc82a"/></svg>
      <span class="font-['Open_Sans',sans-serif] text-[17px] font-bold italic [text-shadow:1px_1px_2px_#143c14]">start</span>
    </button>
    <div class="flex-1 flex gap-0.5 pl-[9px] pt-[3px] pb-0.5">
      <button class="w-[159px] flex items-center gap-[3px] pl-2 rounded-sm bg-[#3c81f3] border border-[#5a98f8] whitespace-nowrap">
        <svg class="w-[17px] h-[17px] shrink-0" viewBox="0 0 17 17"><circle cx="9" cy="8" r="6.500" fill="#2b5fb0"/><path d="M2 3C4 3 5 4 7 5 10 5 10 7 8 8 9 11 13 10 13 6 13 4 12 3 11 1 16 3 18 9 14 13 10 17 4 16 2 12 0 9 1 6 2 3z" fill="#ef7a1a" stroke="#b34a08" stroke-width=".6"/></svg>
        <span>Pictures by NYCTA_2...</span>
      </button>
      <button class="w-[159px] flex items-center gap-1 pl-2 rounded-sm bg-[#1e52b7] border border-[#173f98] whitespace-nowrap">
        <svg class="w-4 h-4 shrink-0"><use href="#i-app"/></svg>
        <span>Amtrak Station - Sket...</span>
      </button>
    </div>
    <div class="relative flex items-center gap-2 pl-2.5 pr-[17px] border-l border-[#092e51] bg-linear-to-b from-[#2ab8f0] via-[#118be4] via-20% to-[#14a0ee]">
      <button aria-label="Show hidden icons" class="absolute -left-[10px] top-1.5 w-[18px] h-[18px]"><svg viewBox="0 0 18 18"><circle cx="9" cy="9" r="8.500" fill="#2a8ce8" stroke="#9ad4ff"/><path d="M11 5 7 9l4 4" fill="none" stroke="#fff" stroke-width="2"/></svg></button>
      <svg class="w-[18px] h-[18px]" viewBox="0 0 16 16"><path d="M1 3h8v7H1z" fill="#20305c" stroke="#aac"/><path d="M3 11h4l2 3H2z" fill="#ddd"/><path d="M11 3q2 3 0 6M13 2q3 4 0 8" fill="none" stroke="#cde"/></svg>
      <time>3:34 PM</time>
    </div>
  </div>
</body>
</html>
